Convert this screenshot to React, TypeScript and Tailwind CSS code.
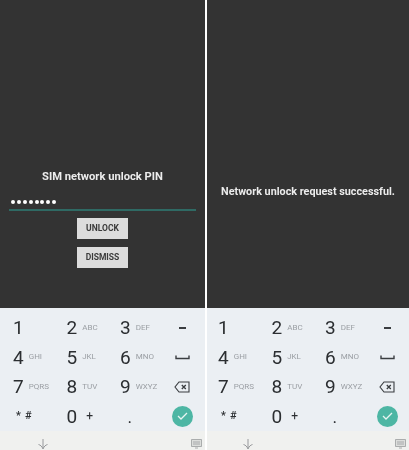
import { ReactNode } from "react";

const font = { fontFamily: '"Roboto", "Liberation Sans", sans-serif' };

const keys = [
  ["1", ""],
  ["2", "ABC"],
  ["3", "DEF"],
  ["4", "GHI"],
  ["5", "JKL"],
  ["6", "MNO"],
  ["7", "PQRS"],
  ["8", "TUV"],
  ["9", "WXYZ"],
];

function Key({ digit, sub }: { digit: string; sub: string }) {
  return (
    <div className="flex items-center gap-[5px] h-[29.5px]">
      <span className="text-[19px] leading-none text-[#2b2e31]">{digit}</span>
      <span className="text-[8px] leading-none text-[#9a9ea3]">{sub}</span>
    </div>
  );
}

function SideKey({ children }: { children: ReactNode }) {
  return <div className="flex items-center justify-center h-[29.5px] w-[30px] text-[#3a3d40]">{children}</div>;
}

function Keyboard({ offset }: { offset: string }) {
  return (
    <div className="h-[142px] flex flex-col bg-[#ebeff3]">
      <div className={`flex flex-1 pt-[5px] ${offset}`}>
        <div className="grid grid-cols-[53.5px_53.5px_47px] content-start">
          {keys.map(([d, s]) => (
            <Key key={d} digit={d} sub={s} />
          ))}
          <div className="flex items-center pl-[3px] h-[29.5px] text-[11px] font-medium text-[#2b2e31] tracking-[1px]">*&#8201;#</div>
          <div className="flex items-center gap-[9px] h-[29.5px]">
            <span className="text-[19px] leading-none text-[#2b2e31]">0</span>
            <span className="text-[12px] leading-none text-[#2b2e31]">+</span>
          </div>
          <div className="flex items-end pb-[6px] pl-[8px] h-[29.5px] text-[12px] leading-none font-bold text-[#2b2e31]">.</div>
        </div>
        <div className="flex flex-col items-center w-[30px]">
          <SideKey>
            <div className="w-[7px] h-[2px] bg-[#3a3d40]" />
          </SideKey>
          <SideKey>
            <svg width="15" height="6" viewBox="0 0 15 6" fill="none" stroke="#3a3d40" strokeWidth="1.4">
              <path d="M1 1.5V4.5H14V1.5" />
            </svg>
          </SideKey>
          <SideKey>
            <svg width="16" height="12" viewBox="0 0 16 12" fill="none" stroke="#3a3d40" strokeWidth="1.1">
              <path d="M5 1H15V11H5L1 6Z" />
              <path d="M7.8 4L11.8 8M11.8 4L7.8 8" strokeWidth="1.3" />
            </svg>
          </SideKey>
          <SideKey>
            <div className="flex items-center justify-center w-[21px] h-[21px] rounded-full bg-[#4db6a4]">
              <svg width="11" height="8" viewBox="0 0 11 8" fill="none" stroke="#e8f5f2" strokeWidth="1.3">
                <path d="M1 4L4 7L10 1" />
              </svg>
            </div>
          </SideKey>
        </div>
      </div>
      <div className={`h-[21px] flex items-center justify-between pt-[7px] bg-[#f0f1ef] ${offset}`}>
        <svg className="ml-[24px]" width="12" height="12" viewBox="0 0 12 12" fill="none" stroke="#8d9093" strokeWidth="0.9">
          <path d="M6 1V10M1.5 6.5C3.5 7 5 8.5 6 11C7 8.5 8.5 7 10.5 6.5" />
        </svg>
        <svg className="mr-[3px]" width="11" height="10" viewBox="0 0 11 10" fill="#dcdedc" stroke="#9a9d9e" strokeWidth="0.8">
          <path d="M0.5 0.5H10.5V7.5H0.5Z" />
          <path d="M2 3H9M2 5H9M4 9H7" />
        </svg>
      </div>
    </div>
  );
}

export default function App() {
  return (
    <div className="flex w-[409px] h-[450px] bg-white overflow-hidden antialiased blur-[0.4px]" style={font}>
      <div className="w-[205px] flex flex-col">
        <div className="flex-1 flex flex-col items-center bg-[#333333] pt-[170px]">
          <div className="text-[11.2px] leading-[14px] font-bold text-[#ececec]">SIM network unlock PIN</div>
          <div className="w-[187px] h-[16px] mt-[11px] flex items-center gap-[1.9px] border-b-2 border-[#2f6a64] pl-[2px]">
            {[0, 1, 2, 3, 4, 5, 6, 7].map((i) => (
              <span key={i} className="w-[4px] h-[4px] rounded-full bg-white" />
            ))}
          </div>
          <div className="mt-[7px] w-[51px] h-[21px] flex items-center justify-center bg-[#dcdcdc] text-[8.5px] font-bold text-[#3a3a3a]">UNLOCK</div>
          <div className="mt-[8px] w-[51px] h-[21px] flex items-center justify-center bg-[#dcdcdc] text-[8.5px] font-bold text-[#3a3a3a]">DISMISS</div>
        </div>
        <Keyboard offset="pl-[13px]" />
      </div>
      <div className="w-[2px]" />
      <div className="flex-1 flex flex-col">
        <div className="flex-1 flex flex-col items-center bg-[#333333] pt-[185px]">
          <div className="text-[10.8px] leading-[14px] font-bold text-[#ececec]">Network unlock request successful.</div>
        </div>
        <Keyboard offset="pl-[11px]" />
      </div>
    </div>
  );
}
